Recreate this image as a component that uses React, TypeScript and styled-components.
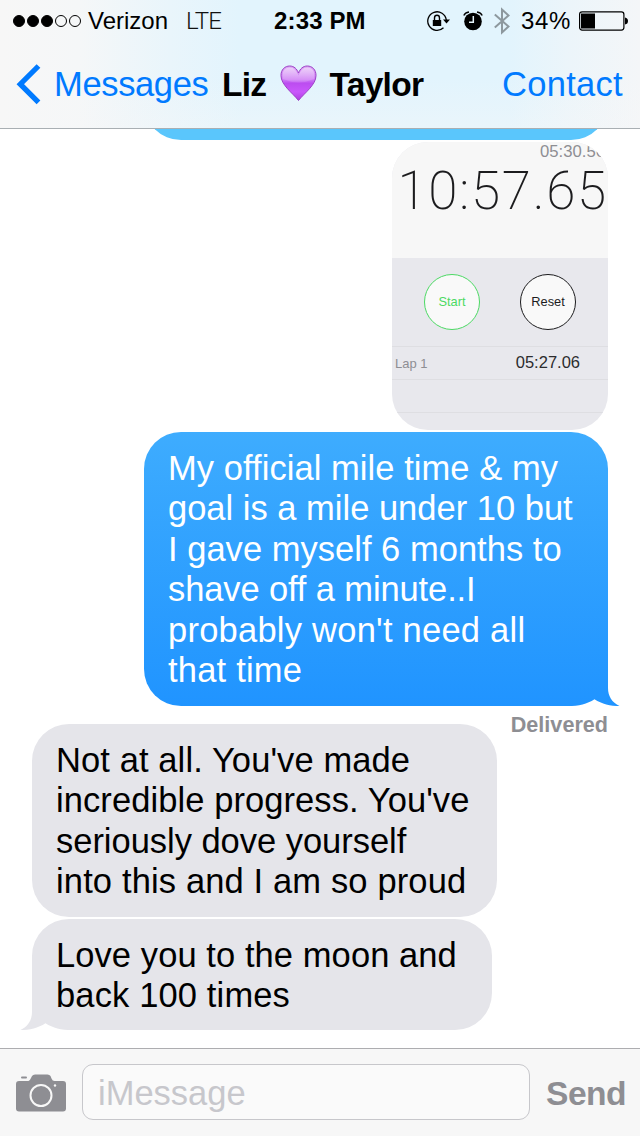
import React from 'react';
import styled, { createGlobalStyle } from 'styled-components';

const GlobalStyle = createGlobalStyle`
  html, body { margin: 0; background: #fff; }
  * { box-sizing: border-box; }
`;

const BUBBLE_RADIUS = 37;

type Side = 'left' | 'right';
// [text, letter spacing]
type TextLine = [string, number];

const officialTime: TextLine[] = [
  ['My official mile time & my', 0.06],
  ['goal is a mile under 10 but', 0],
  ['I gave myself 6 months to', 0.02],
  ['shave off a minute..I', -0.12],
  ["probably won't need all", 0.24],
  ['that time', 0.2],
];

const progress: TextLine[] = [
  ["Not at all. You've made", 0.1],
  ["incredible progress. You've", 0.08],
  ['seriously dove yourself', -0.03],
  ['into this and I am so proud', 0.14],
];

const moon: TextLine[] = [
  ['Love you to the moon and', 0.08],
  ['back 100 times', 0.14],
];

const Screen = styled.div`
  display: flex;
  flex-direction: column;
  width: 640px;
  height: 1136px;
  overflow: hidden;
  background: #fff;
  color: #000;
  font-family: 'Liberation Sans', Arial, sans-serif;
`;

const Header = styled.header`
  flex: none;
  height: 129px;
  border-bottom: 1px solid #a9afb3;
  background:
    linear-gradient(180deg, rgba(247, 247, 247, 0) 60%, rgba(247, 247, 247, 0.35) 100%),
    linear-gradient(90deg, #f7f7f7 0, #f5f7f8 80px, #e9f5fb 170px, #e2f4fd 240px, #e2f4fd 510px, #ecf5fa 570px, #f4f6f8 640px);
`;

const StatusBar = styled.div`
  display: flex;
  align-items: center;
  height: 40px;
  padding: 1px 10px 0 13px;
  font-size: 24px;
  white-space: pre;
`;

const Signal = styled.div`
  display: flex;
  gap: 2px;
  margin-right: 7px;
`;

const SignalDot = styled.i<{ $filled?: boolean }>`
  width: 12px;
  height: 12px;
  border: 1px solid #000;
  border-radius: 50%;
  background: ${({ $filled }) => ($filled ? '#000' : 'transparent')};
`;

const Carrier = styled.span`
  flex: none;
  width: 98px;
`;

const Network = styled.span`
  flex: none;
  width: 87px;
  color: #111;
  font-family: Roboto, 'Liberation Sans', sans-serif;
  font-weight: 300;
  letter-spacing: -0.7px;
`;

const Clock = styled.span`
  flex: none;
  width: 154px;
  padding-left: 1px;
  font-weight: bold;
  font-size: 24px;
  letter-spacing: 0.15px;
`;

const StatusIcon = styled.svg<{ $gap: number }>`
  flex: none;
  margin-right: ${({ $gap }) => $gap}px;
`;

const Percent = styled.span`
  flex: none;
  width: 58px;
  letter-spacing: 0.6px;
`;

const NavBar = styled.nav`
  display: flex;
  align-items: center;
  height: 88px;
  padding: 1px 16px 0;
  font-size: 34.5px;
  white-space: nowrap;
`;

const NavLink = styled.a<{ $width: number; $tracking: number }>`
  flex: none;
  width: ${({ $width }) => $width}px;
  color: #007aff;
  letter-spacing: ${({ $tracking }) => $tracking}px;
`;

const Chevron = styled.svg`
  flex: none;
  margin-right: 13px;
`;

const Title = styled.h1`
  display: flex;
  flex: none;
  align-items: center;
  width: 280px;
  margin: 0;
  font-size: 33.5px;
  letter-spacing: -0.7px;
`;

const Heart = styled.svg`
  flex: none;
  margin: -4px 12px 0 14px;
`;

const Thread = styled.main`
  display: flex;
  flex: 1;
  flex-direction: column;
  justify-content: flex-end;
  min-height: 0;
  padding: 0 32px 18px;
  overflow: hidden;
`;

const Bubble = styled.div<{ $sent?: boolean; $tail?: Side; $width: number; $height: number; $after?: number }>`
  position: relative;
  flex: none;
  align-self: ${({ $sent }) => ($sent ? 'flex-end' : 'flex-start')};
  width: ${({ $width }) => $width}px;
  height: ${({ $height }) => $height}px;
  margin-bottom: ${({ $after }) => $after ?? 0}px;
  padding: 15.5px 0 0 24px;
  border-radius: ${BUBBLE_RADIUS}px;
  ${({ $tail }) => $tail && `border-bottom-${$tail}-radius: 0;`}
  background: ${({ $sent }) => ($sent ? 'linear-gradient(#3eacfe, #2094ff)' : '#e5e5ea')};
  color: ${({ $sent }) => ($sent ? '#fff' : '#000')};
  font-size: 34.5px;
  line-height: 40.6px;
  white-space: nowrap;
`;

const PreviousBubble = styled(Bubble)`
  background: #5ac6fc;
`;

const Line = styled.div<{ $tracking: number }>`
  letter-spacing: ${({ $tracking }) => $tracking}px;
`;

const Tail = styled.svg<{ $side: Side }>`
  position: absolute;
  bottom: 0;
  ${({ $side }) => $side}: -12px;
  transform: ${({ $side }) => ($side === 'left' ? 'scaleX(-1)' : 'none')};
`;

const Receipt = styled.div`
  flex: none;
  align-self: flex-end;
  height: 18px;
  color: #8e8e93;
  font-size: 21.6px;
  font-weight: bold;
  line-height: 37px;
`;

const Photo = styled.figure`
  display: flex;
  flex: none;
  flex-direction: column;
  align-self: flex-end;
  width: 216px;
  height: 288px;
  margin: 0 0 2px;
  overflow: hidden;
  border-radius: 36px;
  background: #e8e8ed;
`;

const Times = styled.div`
  flex: none;
  height: 116px;
  overflow: hidden;
  background: #f7f7f7;
  text-align: right;
`;

const LapTime = styled.div`
  height: 20px;
  padding-right: 3px;
  color: #8e8e93;
  font-size: 16.7px;
  line-height: 20px;
`;

const TotalTime = styled.div`
  color: #1c1c1e;
  font-family: Roboto, 'Liberation Sans', sans-serif;
  font-size: 53px;
  font-weight: 200;
  letter-spacing: 1.7px;
  line-height: 59px;
`;

const Controls = styled.div`
  display: flex;
  flex: none;
  gap: 40px;
  height: 88px;
  padding: 16px 0 0 32px;
`;

const RoundButton = styled.div<{ $color: string }>`
  display: flex;
  align-items: center;
  justify-content: center;
  width: 56px;
  height: 56px;
  padding-bottom: 1px;
  border: 1px solid ${({ $color }) => $color};
  border-radius: 50%;
  background: #f9f9f9;
  color: ${({ $color }) => $color};
  font-size: 12.8px;
`;

const LapRow = styled.div`
  display: flex;
  flex: none;
  align-items: center;
  justify-content: space-between;
  height: 33px;
  padding: 0 28px 2px 3px;
  border-top: 1px solid #dedee2;
  color: #2c2c2e;
  font-size: 16.5px;
`;

const LapLabel = styled.span`
  padding-top: 2px;
  color: #8e8e93;
  font-size: 13px;
`;

const Composer = styled.footer`
  display: flex;
  flex: none;
  align-items: center;
  height: 88px;
  padding: 0 0 0 16px;
  border-top: 1px solid #adadb0;
  background: #f7f7f7;
`;

const Input = styled.div`
  flex: none;
  width: 448px;
  height: 56px;
  margin: -1px 16px 0;
  padding-left: 15px;
  border: 1px solid #c7c7cb;
  border-radius: 11px;
  background: #fafafa;
  color: #c7c7cc;
  font-size: 34.5px;
  line-height: 56px;
`;

const Send = styled.span`
  padding-top: 2px;
  color: #8e8e93;
  font-size: 33.6px;
  font-weight: bold;
  letter-spacing: -0.5px;
`;

const Lines = ({ lines }: { lines: TextLine[] }) => (
  <>
    {lines.map(([text, tracking]) => (
      <Line key={text} $tracking={tracking}>{text}</Line>
    ))}
  </>
);

const BubbleTail = ({ side, color }: { side: Side; color: string }) => (
  <Tail $side={side} width="52" height="18" viewBox="0 0 52 18">
    <path d="M39.500 0H40C40 8 44 14.500 51.500 18H39.500Z" fill={color} />
    <path d="M0 18C11 18 19 16 26.500 11.200C34 16 42 18 52 18Z" fill="#fff" />
  </Tail>
);

const App = () => (
  <>
    <GlobalStyle />
    <Screen>
      <Header>
        <StatusBar>
          <Signal>
            <SignalDot $filled />
            <SignalDot $filled />
            <SignalDot $filled />
            <SignalDot />
            <SignalDot />
          </Signal>
          <Carrier>Verizon</Carrier>
          <Network>LTE</Network>
          <Clock>2:33 PM</Clock>
          <StatusIcon $gap={13} width="23" height="22" viewBox="0 0 23 22">
            <path d="M16.500 17.800A9.300 9.300 0 1 1 19.300 10" fill="none" stroke="#000" strokeWidth="1.300" />
            <path d="M16 9.500H23L19.500 13.500Z" />
            <path d="M5.800 10H14.200V16H5.800Z" />
            <path d="M7.500 10.500V8A2.500 2.700 0 0 1 12.500 8V10.500" fill="none" stroke="#000" strokeWidth="1.400" />
          </StatusIcon>
          <StatusIcon $gap={11} width="20" height="22" viewBox="0 0 20 22">
            <circle cx="10" cy="11.500" r="8.800" />
            <path d="M10.300 6V12.200H6" fill="none" stroke="#e6f5fc" strokeWidth="1.500" />
            <path d="M.8 5.500Q2 2.500 6 2M14 2Q18 2.500 19.200 5.500" fill="none" stroke="#000" strokeWidth="1.300" />
          </StatusIcon>
          <StatusIcon $gap={11} width="16" height="28" viewBox="0 0 16 28">
            <path d="M.8 7.500L14.500 19.500L8 25.500V2.500L14.500 8.500L.8 20.500" fill="none" stroke="#8d989e" strokeWidth="2" />
          </StatusIcon>
          <Percent>34%</Percent>
          <StatusIcon $gap={0} width="50" height="20" viewBox="0 0 50 20">
            <rect x=".6" y=".9" width="44.300" height="18.200" rx="2.500" fill="none" stroke="#000" strokeWidth="1.200" />
            <path d="M2 2.500H16V17.500H2ZM46 6.500Q49 7 49 10T46 13.500Z" />
          </StatusIcon>
        </StatusBar>
        <NavBar>
          <Chevron width="25" height="41" viewBox="0 0 25 41">
            <path d="M22.500 2L4.300 20.200L22.500 38.400" fill="none" stroke="#007aff" strokeWidth="5.300" />
          </Chevron>
          <NavLink $width={168} $tracking={-0.35}>Messages</NavLink>
          <Title>
            Liz
            <Heart width="37" height="36" viewBox="0 0 38 36" preserveAspectRatio="none">
              <defs>
                <linearGradient id="heart" x2="0" y2="1">
                  <stop offset="0" stopColor="#dba4f4" />
                  <stop offset=".4" stopColor="#cd78f5" />
                  <stop offset=".5" stopColor="#bc4df0" />
                  <stop offset=".75" stopColor="#c957fb" />
                  <stop offset="1" stopColor="#ad3de0" />
                </linearGradient>
                <linearGradient id="shine" x2="0" y2="1">
                  <stop offset="0" stopColor="#fff" stopOpacity=".5" />
                  <stop offset="1" stopColor="#fff" stopOpacity=".1" />
                </linearGradient>
              </defs>
              <path d="M19 35.500C13 28 1 20 1 10.500C1 4.500 5 1 10 1C14.500 1 17.500 4 19 8C20.500 4 23.500 1 28 1C33 1 37 4.500 37 10.500C37 20 25 28 19 35.500Z" fill="url(#heart)" stroke="#9a3fc4" strokeWidth="1" />
              <path d="M3 14C1.500 6 5 2.500 10 2.500C14.500 2.500 17 6 19 10.500C21 6 23.500 2.500 28 2.500C33 2.500 36.500 6 35 14Q19 21 3 14Z" fill="url(#shine)" />
            </Heart>
            Taylor
          </Title>
          <NavLink $width={124} $tracking={0.3}>Contact</NavLink>
        </NavBar>
      </Header>

      <Thread>
        <PreviousBubble $sent $width={464} $height={110} $after={2} />
        <Photo>
          <Times>
            <LapTime>05:30.56</LapTime>
            <TotalTime>10:57.65</TotalTime>
          </Times>
          <Controls>
            <RoundButton $color="#4cd964">Start</RoundButton>
            <RoundButton $color="#1c1c1e">Reset</RoundButton>
          </Controls>
          <LapRow>
            <LapLabel>Lap 1</LapLabel>
            05:27.06
          </LapRow>
          <LapRow />
          <LapRow />
        </Photo>
        <Bubble $sent $tail="right" $width={464} $height={274}>
          <Lines lines={officialTime} />
          <BubbleTail side="right" color="#2094ff" />
        </Bubble>
        <Receipt>Delivered</Receipt>
        <Bubble $width={465} $height={193} $after={2}>
          <Lines lines={progress} />
        </Bubble>
        <Bubble $tail="left" $width={460} $height={111}>
          <Lines lines={moon} />
          <BubbleTail side="left" color="#e5e5ea" />
        </Bubble>
      </Thread>

      <Composer>
        <svg width="50" height="38" viewBox="0 0 50 38">
          <path d="M3 7H12.500Q14 6.500 15 4L16 2Q17 .5 19 .5H31.500Q33.500 .5 34.500 2L35.500 4.500Q36.500 7 38.500 7H47Q50 7 50 10V34.500Q50 37.500 47 37.500H3Q0 37.500 0 34.500V10Q0 7 3 7Z" fill="#8e8e93" />
          <rect x="5" y="2.500" width="6" height="2" rx="1" fill="#8e8e93" />
          <circle cx="25" cy="21.500" r="10.500" fill="none" stroke="#f7f7f7" strokeWidth="2" />
          <circle cx="39" cy="11.500" r="1.200" fill="#f7f7f7" />
        </svg>
        <Input>iMessage</Input>
        <Send>Send</Send>
      </Composer>
    </Screen>
  </>
);

export default App;
